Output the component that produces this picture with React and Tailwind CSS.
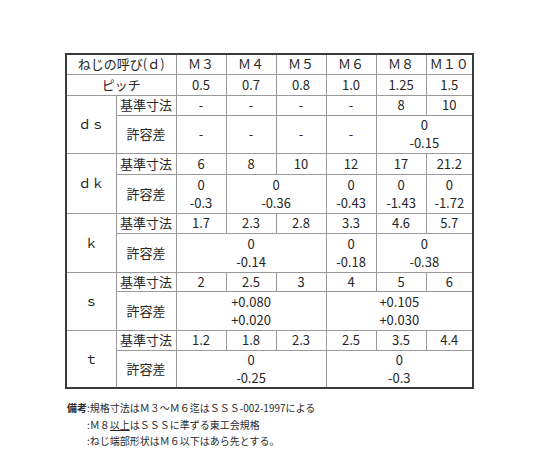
import React from "react";

const cols = ["Ｍ３", "Ｍ４", "Ｍ５", "Ｍ６", "Ｍ８", "Ｍ１０"];

function Two({ a, b }) {
  return (
    <div className="flex flex-col items-center leading-[18px]">
      <span>{a}</span>
      <span>{b}</span>
    </div>
  );
}

const groups = [
  {
    label: "ｄｓ",
    h1: "h-[20px]",
    h2: "h-[38px]",
    base: ["-", "-", "-", "-", "8", "10"],
    tol: [
      { s: 1, v: "-" },
      { s: 1, v: "-" },
      { s: 1, v: "-" },
      { s: 1, v: "-" },
      { s: 2, v: ["0", "-0.15"] },
    ],
  },
  {
    label: "ｄｋ",
    h1: "h-[21px]",
    h2: "h-[39px]",
    base: ["6", "8", "10", "12", "17", "21.2"],
    tol: [
      { s: 1, v: ["0", "-0.3"] },
      { s: 2, v: ["0", "-0.36"] },
      { s: 1, v: ["0", "-0.43"] },
      { s: 1, v: ["0", "-1.43"] },
      { s: 1, v: ["0", "-1.72"] },
    ],
  },
  {
    label: "ｋ",
    h1: "h-[20px]",
    h2: "h-[39px]",
    base: ["1.7", "2.3", "2.8", "3.3", "4.6", "5.7"],
    tol: [
      { s: 3, v: ["0", "-0.14"] },
      { s: 1, v: ["0", "-0.18"] },
      { s: 2, v: ["0", "-0.38"] },
    ],
  },
  {
    label: "ｓ",
    h1: "h-[19px]",
    h2: "h-[39px]",
    base: ["2", "2.5", "3", "4", "5", "6"],
    tol: [
      { s: 3, v: ["+0.080", "+0.020"] },
      { s: 3, v: ["+0.105", "+0.030"] },
    ],
  },
  {
    label: "ｔ",
    h1: "h-[20px]",
    h2: "h-[37px]",
    base: ["1.2", "1.8", "2.3", "2.5", "3.5", "4.4"],
    tol: [
      { s: 3, v: ["0", "-0.25"] },
      { s: 3, v: ["0", "-0.3"] },
    ],
  },
];

const td = "border border-[#9a9a9a] p-0 text-center align-middle";

export default function App() {
  return (
    <div
      className="w-[540px] h-[450px] bg-white text-[#262626] pt-[53px] pl-[65px]"
      style={{ fontFamily: '"Noto Sans CJK JP", "Noto Sans", sans-serif' }}
    >
      <div className="inline-block border-2 border-[#3a3a3a]">
        <table className="border-collapse border-hidden table-fixed w-[405px] text-[13px] leading-[16px]">
          <colgroup>
            <col className="w-[49px]" />
            <col className="w-[60px]" />
            <col className="w-[50px]" />
            <col className="w-[50px]" />
            <col className="w-[50px]" />
            <col className="w-[50px]" />
            <col className="w-[50px]" />
            <col className="w-[46px]" />
          </colgroup>
          <tbody>
            <tr className="h-[19px]">
              <td className={td} colSpan={2}>
                ねじの呼び(ｄ)
              </td>
              {cols.map((c) => (
                <td key={c} className={td}>
                  {c}
                </td>
              ))}
            </tr>
            <tr className="h-[21px]">
              <td className={td} colSpan={2}>
                ピッチ
              </td>
              {["0.5", "0.7", "0.8", "1.0", "1.25", "1.5"].map((v, i) => (
                <td key={i} className={td}>
                  {v}
                </td>
              ))}
            </tr>
            {groups.map((g) => (
              <React.Fragment key={g.label}>
                <tr className={g.h1}>
                  <td className={td} rowSpan={2}>
                    {g.label}
                  </td>
                  <td className={td}>基準寸法</td>
                  {g.base.map((v, i) => (
                    <td key={i} className={td}>
                      {v}
                    </td>
                  ))}
                </tr>
                <tr className={g.h2}>
                  <td className={td}>許容差</td>
                  {g.tol.map((t, i) => (
                    <td key={i} className={td} colSpan={t.s}>
                      {Array.isArray(t.v) ? <Two a={t.v[0]} b={t.v[1]} /> : t.v}
                    </td>
                  ))}
                </tr>
              </React.Fragment>
            ))}
          </tbody>
        </table>
      </div>
      <div className="mt-[6px] ml-[2px] text-[10px] leading-[16.5px] text-[#2a2a2a]">
        <div>
          <span className="font-bold">備考</span>:規格寸法はＭ３～Ｍ６迄はＳＳＳ-002-1997による
        </div>
        <div className="pl-[20px]">
          :Ｍ８<span className="underline">以上</span>はＳＳＳに準ずる東工会規格
        </div>
        <div className="pl-[20px]">:ねじ端部形状はＭ６以下はあら先とする。</div>
      </div>
    </div>
  );
}
